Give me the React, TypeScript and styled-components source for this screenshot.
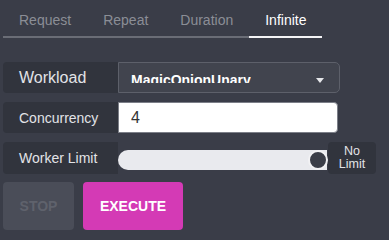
import styled, { createGlobalStyle } from 'styled-components';

const GlobalStyle = createGlobalStyle`
  html, body {
    margin: 0;
    padding: 0;
    background-color: #3a3d48;
    font-family: 'Liberation Sans', Arial, sans-serif;
  }
`;

const tabs = ['Request', 'Repeat', 'Duration', 'Infinite'];

const App = () => {
  return (
    <>
      <GlobalStyle />
      <Page>
        <TabList>
          {tabs.map((tab) => (
            <Tab key={tab} $active={tab === 'Infinite'}>
              {tab}
            </Tab>
          ))}
        </TabList>
        <Form>
          <Row>
            <Label $size={16}>Workload</Label>
            <Select>
              <SelectValue>MagicOnionUnary</SelectValue>
              <svg width="8" height="5" viewBox="0 0 8 5">
                <path d="M0 0 L8 0 L4 5 Z" fill="#e6e7ea" />
              </svg>
            </Select>
          </Row>
          <Row>
            <Label>Concurrency</Label>
            <Input defaultValue="4" />
          </Row>
          <Row $height={32}>
            <Label>Worker Limit</Label>
            <Track>
              <Thumb />
            </Track>
            <LimitBox>
              <span>No</span>
              <span>Limit</span>
            </LimitBox>
          </Row>
          <ButtonRow>
            <Button $variant="stop">STOP</Button>
            <Button $variant="execute">EXECUTE</Button>
          </ButtonRow>
        </Form>
      </Page>
    </>
  );
};

const Page = styled.div`
  padding: 3px 0 0 3px;
  width: 389px;
  height: 240px;
  box-sizing: border-box;
`;

const TabList = styled.div`
  display: flex;
`;

const Tab = styled.div<{ $active?: boolean }>`
  padding: 9px 16px 8px;
  font-size: 14px;
  line-height: 16px;
  color: ${(p) => (p.$active ? '#ffffff' : '#8b8e96')};
  border-bottom: 2px solid ${(p) => (p.$active ? '#f4f4f6' : '#6a6d76')};
`;

const Form = styled.div`
  margin-top: 24px;
  display: flex;
  flex-direction: column;
  gap: 9px;
`;

const Row = styled.div<{ $height?: number }>`
  display: flex;
  height: ${(p) => p.$height ?? 31}px;
`;

const Label = styled.div<{ $size?: number }>`
  width: 115px;
  box-sizing: border-box;
  padding-left: 16px;
  display: flex;
  align-items: center;
  background-color: #31343d;
  border-radius: 4px 0 0 4px;
  color: #e2e3e7;
  font-size: ${(p) => p.$size ?? 14}px;
`;

const Select = styled.div`
  width: 222px;
  box-sizing: border-box;
  display: flex;
  align-items: flex-start;
  justify-content: space-between;
  padding: 9px 15px 0 12px;
  background-color: #41444e;
  border: 1px solid #5d606a;
  border-radius: 0 5px 5px 0;
  svg {
    margin-top: 6px;
  }
`;

const SelectValue = styled.div`
  height: 11px;
  overflow: hidden;
  line-height: 16px;
  font-size: 14px;
  font-weight: bold;
  color: #ffffff;
`;

const Input = styled.input`
  width: 220px;
  box-sizing: border-box;
  padding: 0 12px;
  border: 1px solid #7c7f88;
  border-radius: 0 4px 4px 0;
  background-color: #ffffff;
  color: #333333;
  font-family: 'Liberation Sans', Arial, sans-serif;
  font-size: 16px;
  outline: none;
`;

const Track = styled.div`
  position: relative;
  width: 209px;
  height: 20px;
  margin-top: 8px;
  background-color: #e9eaee;
  border-radius: 10px 0 0 10px;
`;

const Thumb = styled.div`
  position: absolute;
  top: 0;
  right: -1px;
  width: 20px;
  height: 20px;
  box-sizing: border-box;
  border-radius: 50%;
  border: 2px solid #f2f2f4;
  background-color: #3b3e48;
`;

const LimitBox = styled.div`
  width: 48px;
  margin-left: 1px;
  display: flex;
  flex-direction: column;
  align-items: center;
  justify-content: center;
  background-color: #31343d;
  border-radius: 4px;
  color: #e2e3e7;
  font-size: 12.5px;
  line-height: 13px;
  padding-bottom: 1px;
  box-sizing: border-box;
`;

const ButtonRow = styled.div`
  display: flex;
  gap: 9px;
  margin-top: -1px;
`;

const Button = styled.button<{ $variant: 'stop' | 'execute' }>`
  height: 48px;
  width: ${(p) => (p.$variant === 'stop' ? 71 : 100)}px;
  border: none;
  border-radius: 4px;
  font-family: 'Liberation Sans', Arial, sans-serif;
  font-size: 14px;
  font-weight: bold;
  background-color: ${(p) => (p.$variant === 'stop' ? '#4a4d58' : '#d43ab5')};
  color: ${(p) => (p.$variant === 'stop' ? '#5f626c' : '#ffffff')};
`;

export default App;
